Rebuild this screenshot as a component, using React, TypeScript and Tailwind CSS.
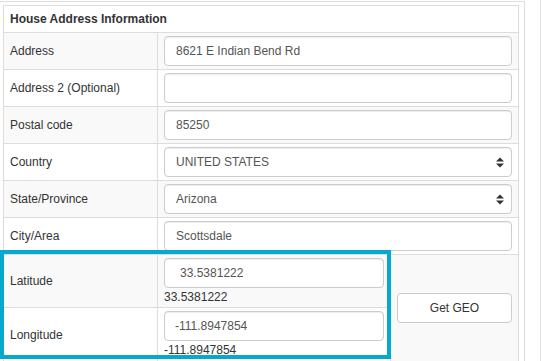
import React from "react";

const font = { fontFamily: '"Liberation Sans", Arial, sans-serif' };

function SortIcon() {
  return (
    <svg width="8" height="11" viewBox="0 0 8 11" className="shrink-0">
      <path d="M0 4.5 L4 0.5 L8 4.5 Z" fill="#333" />
      <path d="M0 6.5 L4 10.5 L8 6.5 Z" fill="#333" />
    </svg>
  );
}

function TextInput({ value, pl = "pl-[11px]", w = "w-full" }: { value: string; pl?: string; w?: string }) {
  return (
    <div
      className={`${w} h-[30px] border border-[#ccc] rounded-[4px] bg-white flex items-center ${pl} text-[12px] text-[#555] shadow-[inset_0_1px_1px_rgba(0,0,0,0.075)]`}
    >
      {value}
    </div>
  );
}

function SelectInput({ value }: { value: string }) {
  return (
    <div className="w-full h-[30px] border border-[#ccc] rounded-[4px] bg-white flex items-center justify-between pl-[11px] pr-[7px] text-[12px] text-[#555] shadow-[inset_0_1px_1px_rgba(0,0,0,0.075)]">
      <span>{value}</span>
      <SortIcon />
    </div>
  );
}

function Row({ label, striped, children }: { label: string; striped?: boolean; children: React.ReactNode }) {
  return (
    <div className={`flex h-[37px] border-t border-[#ddd] ${striped ? "bg-[#f9f9f9]" : "bg-white"}`}>
      <div className="w-[154px] shrink-0 border-r border-[#ddd] flex items-center pl-[6px] text-[12px] text-[#333]">
        {label}
      </div>
      <div className="flex-1 flex items-center px-[6px]">{children}</div>
    </div>
  );
}

export default function App() {
  return (
    <div className="relative w-[544px] h-[361px] bg-white overflow-hidden" style={font}>
      <div className="flex">
        <div className="w-[525px] h-[400px] mt-[1px] border-t border-r border-[#ddd] pt-[3px] pl-[3px] pr-[5px] shrink-0">
          <div className="w-[516px] border border-[#ddd]">
            <div className="h-[26px] flex items-center pl-[6px] text-[12px] font-bold text-[#333] bg-white">
              House Address Information
            </div>
            <Row label="Address" striped>
              <TextInput value="8621 E Indian Bend Rd" />
            </Row>
            <Row label="Address 2 (Optional)">
              <TextInput value="" />
            </Row>
            <Row label="Postal code" striped>
              <TextInput value="85250" />
            </Row>
            <Row label="Country">
              <SelectInput value="UNITED STATES" />
            </Row>
            <Row label="State/Province" striped>
              <SelectInput value="Arizona" />
            </Row>
            <Row label="City/Area">
              <TextInput value="Scottsdale" />
            </Row>
            <div className="flex border-t border-[#ddd]">
              <div className="w-[387px] shrink-0 flex flex-col">
                <div className="flex h-[52px] bg-[#f9f9f9]">
                  <div className="w-[154px] shrink-0 border-r border-[#ddd] flex items-center pl-[6px] text-[12px] text-[#333]">
                    Latitude
                  </div>
                  <div className="flex-1 flex flex-col pt-[3px] px-[6px] border-r border-[#ddd]">
                    <TextInput value="33.5381222" pl="pl-[15px]" />
                    <div className="text-[12px] text-[#333] leading-[14px] mt-[2px]">33.5381222</div>
                  </div>
                </div>
                <div className="flex h-[54px] bg-white border-t border-[#ddd]">
                  <div className="w-[154px] shrink-0 border-r border-[#ddd] flex items-center pl-[6px] text-[12px] text-[#333]">
                    Longitude
                  </div>
                  <div className="flex-1 flex flex-col pt-[3px] px-[6px] border-r border-[#ddd]">
                    <TextInput value="-111.8947854" pl="pl-[10px]" />
                    <div className="text-[12px] text-[#333] leading-[14px] mt-[2px]">-111.8947854</div>
                  </div>
                </div>
              </div>
              <div className="flex-1 bg-[#f9f9f9] flex items-center px-[6px]">
                <div className="w-full h-[30px] border border-[#ccc] rounded-[4px] bg-white flex items-center justify-center text-[12px] text-[#333]">
                  Get GEO
                </div>
              </div>
            </div>
          </div>
        </div>
        <div className="ml-[15px] w-[1px] h-[361px] bg-[#e3e3e3]" />
      </div>
      <div className="absolute left-0 top-[250px] w-[391px] h-[109px] border-[4px] border-[#06a9ce]" />
    </div>
  );
}
